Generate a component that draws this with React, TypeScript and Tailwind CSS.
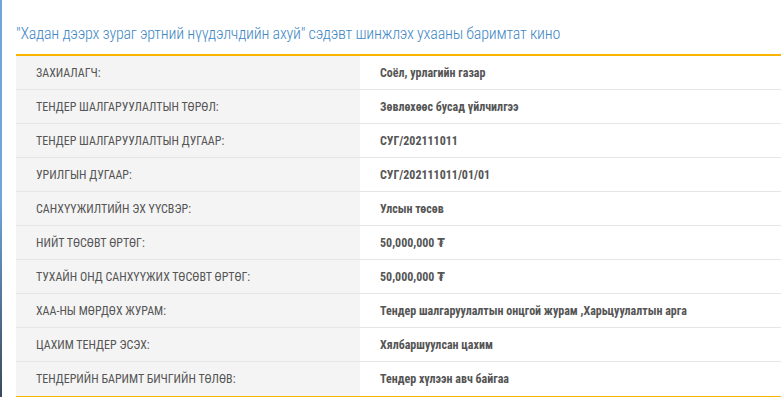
import React from 'react';

const rows = [
  { label: 'ЗАХИАЛАГЧ:', value: 'Соёл, урлагийн газар' },
  { label: 'ТЕНДЕР ШАЛГАРУУЛАЛТЫН ТӨРӨЛ:', value: 'Зөвлөхөөс бусад үйлчилгээ' },
  { label: 'ТЕНДЕР ШАЛГАРУУЛАЛТЫН ДУГААР:', value: 'СУГ/202111011' },
  { label: 'УРИЛГЫН ДУГААР:', value: 'СУГ/202111011/01/01' },
  { label: 'САНХҮҮЖИЛТИЙН ЭХ ҮҮСВЭР:', value: 'Улсын төсөв' },
  { label: 'НИЙТ ТӨСӨВТ ӨРТӨГ:', value: '50,000,000 ₮' },
  { label: 'ТУХАЙН ОНД САНХҮҮЖИХ ТӨСӨВТ ӨРТӨГ:', value: '50,000,000 ₮' },
  { label: 'ХАА-НЫ МӨРДӨХ ЖУРАМ:', value: 'Тендер шалгаруулалтын онцгой журам ,Харьцуулалтын арга' },
  { label: 'ЦАХИМ ТЕНДЕР ЭСЭХ:', value: 'Хялбаршуулсан цахим' },
  { label: 'ТЕНДЕРИЙН БАРИМТ БИЧГИЙН ТӨЛӨВ:', value: 'Тендер хүлээн авч байгаа' },
];

export default function App() {
  return (
    <div className="flex w-[781px] h-[397px] bg-white overflow-hidden font-['Roboto_Condensed','DejaVu_Sans_Condensed',sans-serif]">
      {/* left window edge */}
      <div className="w-[2px] shrink-0 bg-gradient-to-b from-[#6ea6dc] via-[#6ea6dc] to-[#3b4a5c]" />

      <div className="flex-1 pl-[14px]">
        <h1 className="h-[54px] pt-[24px] text-[16px] leading-[20px] tracking-[-0.2px] font-light text-[#3f88c5] whitespace-nowrap">
          "Хадан дээрх зураг эртний нүүдэлчдийн ахуй" сэдэвт шинжлэх ухааны баримтат кино
        </h1>

        <div className="border-t-2 border-b-2 border-[#f7b500]">
          {rows.map((row, i) => (
            <div
              key={i}
              className={`flex h-[34px] ${i < rows.length - 1 ? 'border-b border-[#e6e6e6]' : ''}`}
            >
              <div className="w-[344px] shrink-0 bg-[#f4f4f4] pl-[20px] flex items-center text-[12px] text-[#555]">
                {row.label}
              </div>
              <div className="flex-1 pl-[20px] flex items-center text-[12px] font-bold text-[#555] whitespace-nowrap">
                {row.value}
              </div>
            </div>
          ))}
        </div>
      </div>
    </div>
  );
}
